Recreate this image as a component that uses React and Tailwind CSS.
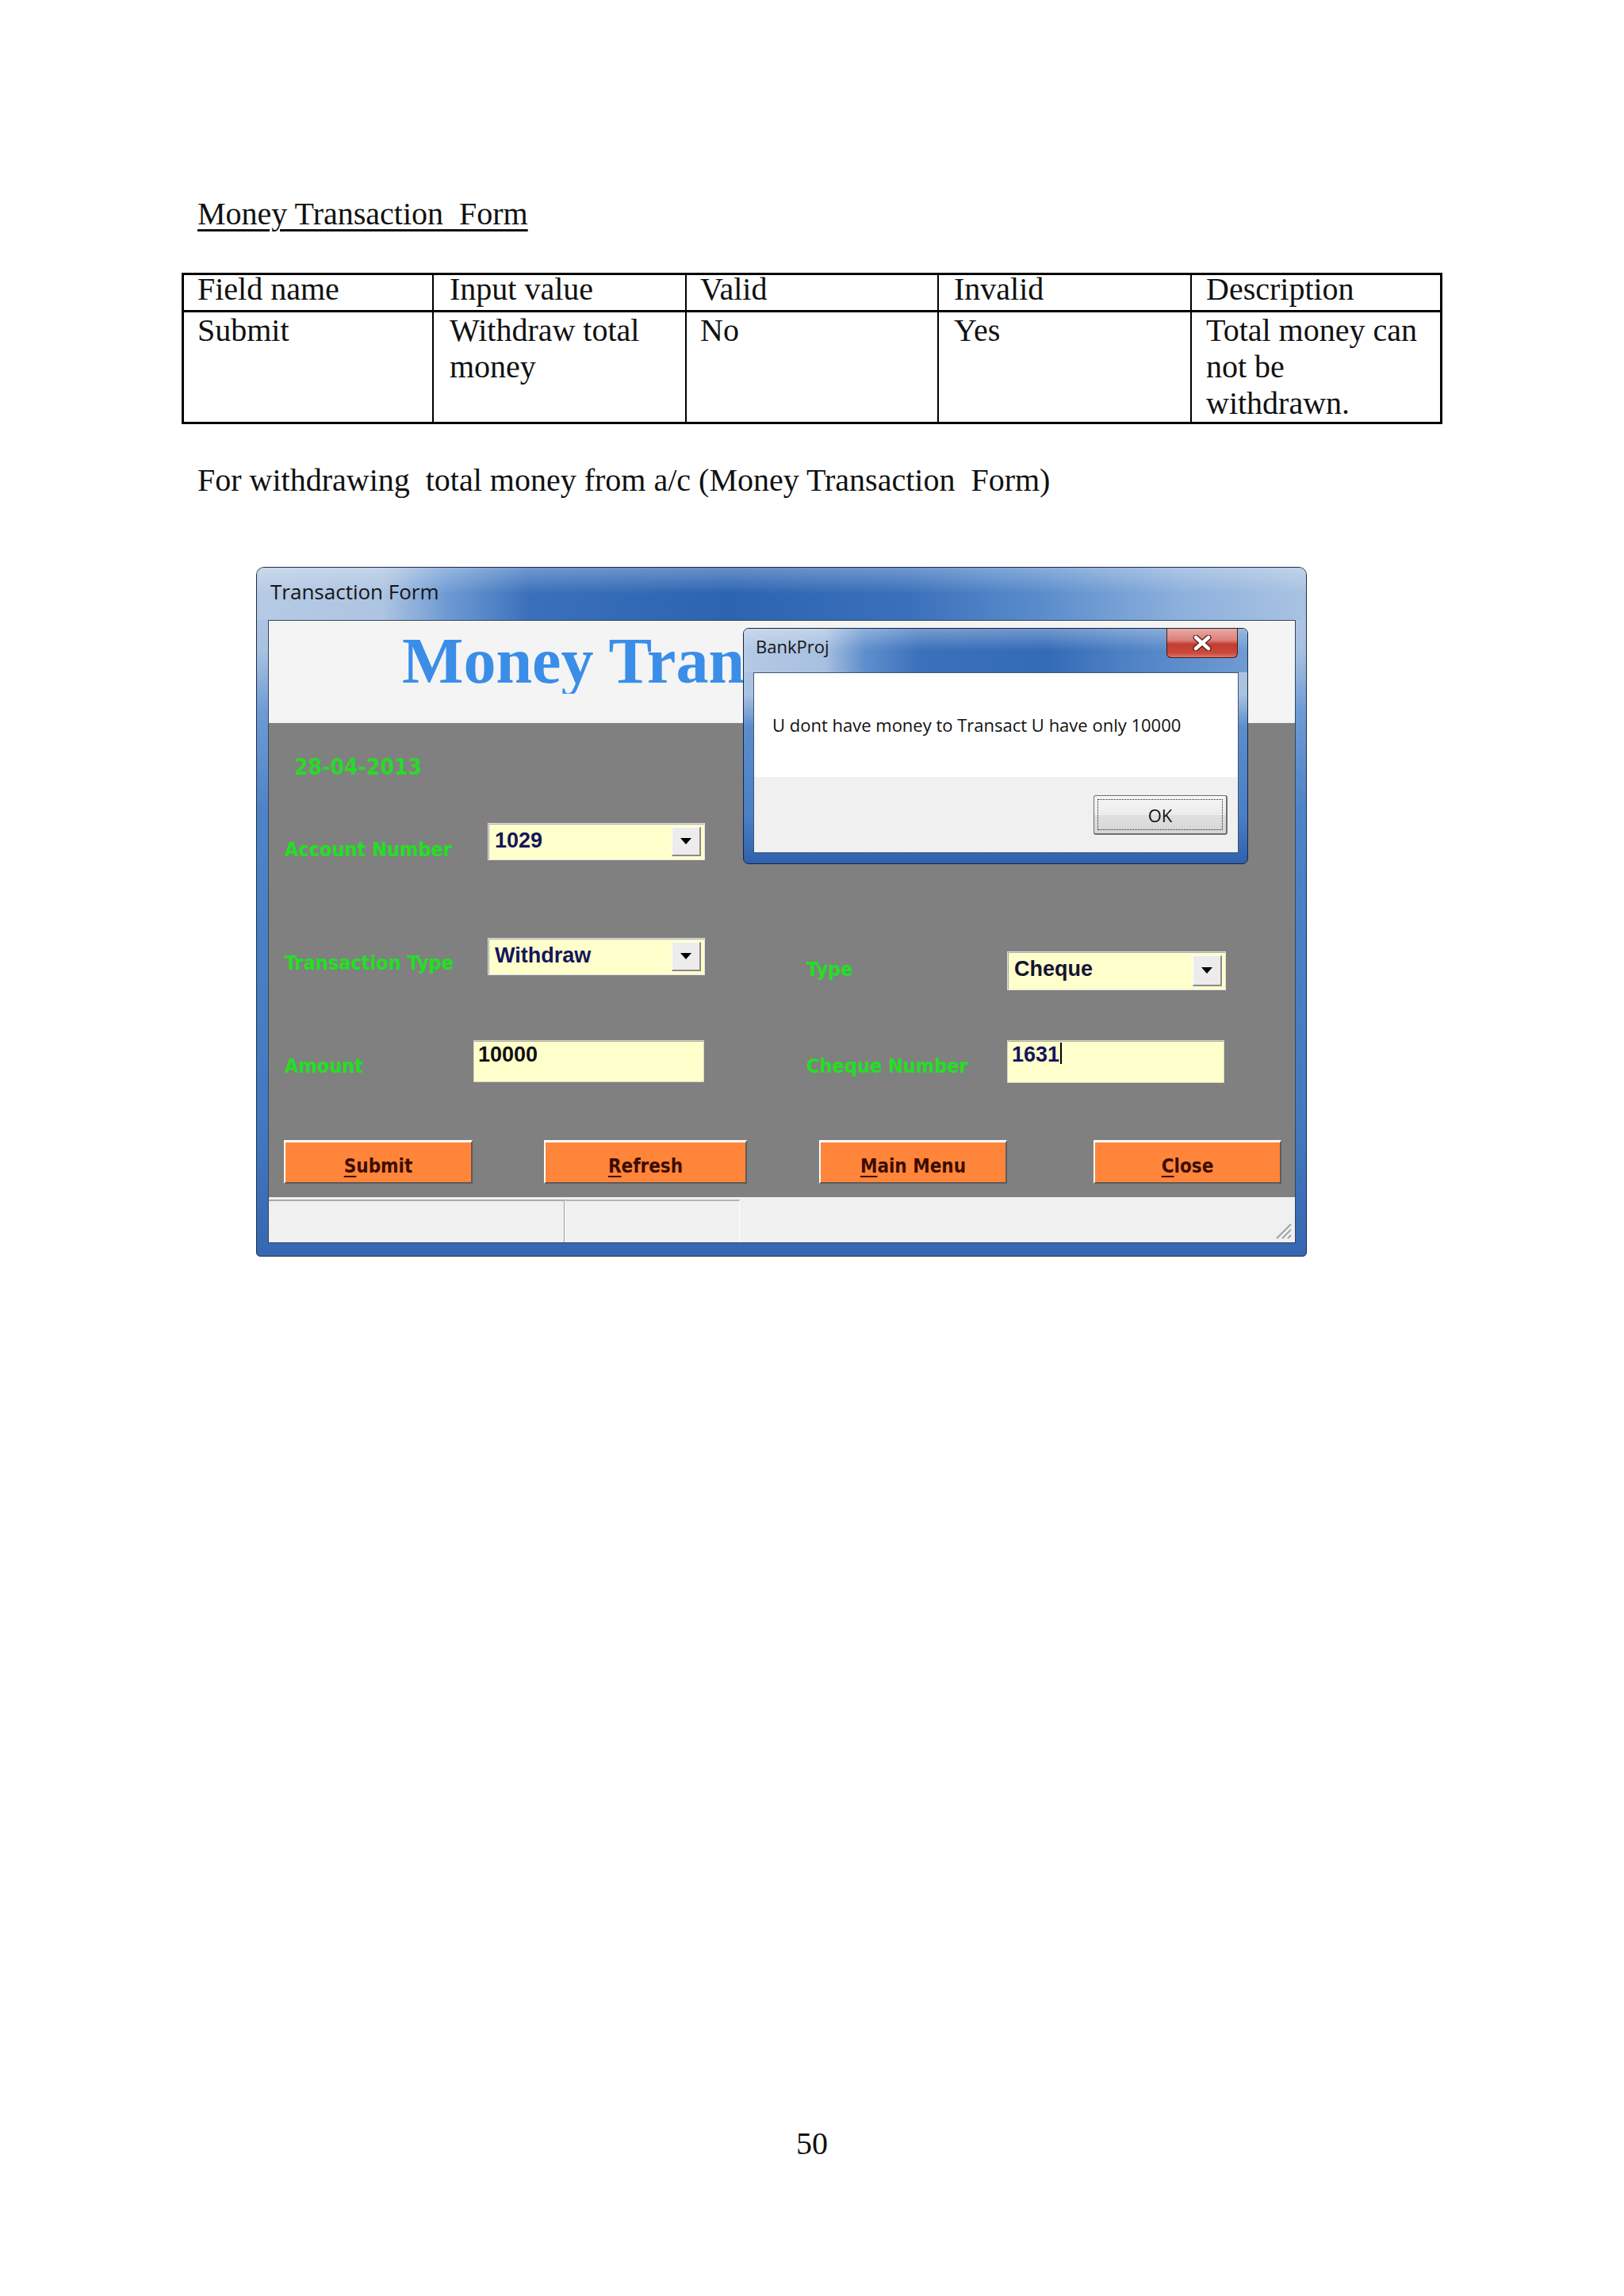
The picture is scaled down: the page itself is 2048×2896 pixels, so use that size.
import React from "react";

function Arrow() {
  return (
    <svg width="14" height="8" viewBox="0 0 14 8">
      <polygon points="0,0 14,0 7,8" fill="#000" />
    </svg>
  );
}

function Combo({ className, text, textClass }) {
  return (
    <div className={`flex border border-[#e4e4e4] bg-[#ffffcc] shadow-[inset_1px_1px_0_#a8a8a8] ${className}`}>
      <span className={`flex-1 pl-[8px] pt-[8px] font-['Liberation_Sans',Arial,sans-serif] font-bold text-[27px] leading-none ${textClass}`}>
        {text}
      </span>
      <div className="my-[4px] mr-[4px] w-[37px] flex items-center justify-center bg-[#ececec] border-t border-l border-t-white border-l-white border-b-2 border-r-2 border-b-[#8a8a8a] border-r-[#8a8a8a]">
        <Arrow />
      </div>
    </div>
  );
}

function Label({ children, className }) {
  return (
    <div className={`font-['DejaVu_Sans_Condensed','DejaVu_Sans',sans-serif] font-stretch-condensed font-bold text-[25px] leading-none text-[#22e022] whitespace-nowrap ${className}`}>
      {children}
    </div>
  );
}

function Btn({ className, first, rest }) {
  return (
    <div className={`h-[55px] flex justify-center items-start pt-[18px] bg-[#ff853a] border-t-[3px] border-l-[2px] border-t-white border-l-white border-b-[2px] border-r-[2px] border-b-[#5c5c5c] border-r-[#5c5c5c] font-['DejaVu_Sans_Condensed','DejaVu_Sans',sans-serif] font-stretch-condensed font-bold text-[24px] leading-none text-[#3d0c00] ${className}`}>
      <span>
        <span className="underline decoration-[2px] underline-offset-[4px]">{first}</span>
        {rest}
      </span>
    </div>
  );
}

export default function App() {
  return (
    <div className="w-[2048px] h-[2896px] bg-white flex flex-col pt-[247px] text-[#111]">
      {/* Heading */}
      <div className="ml-[249px] font-['Liberation_Serif',serif] text-[40px] leading-[46px] whitespace-pre underline decoration-[3px] underline-offset-[6px]">
        {"Money Transaction  Form"}
      </div>

      {/* Table */}
      <div className="ml-[229px] mt-[51px] w-[1590px] border-[3px] border-black font-['Liberation_Serif',serif] text-[40px]">
        <div className="grid grid-cols-[315px_319px_318px_319px_313px] border-b-[3px] border-black h-[47px] leading-[36px]">
          <div className="border-r-2 border-black pl-[17px]">Field name</div>
          <div className="border-r-2 border-black pl-[20px]">Input value</div>
          <div className="border-r-2 border-black pl-[17px]">Valid</div>
          <div className="border-r-2 border-black pl-[19px]">Invalid</div>
          <div className="pl-[18px]">Description</div>
        </div>
        <div className="grid grid-cols-[315px_319px_318px_319px_313px] h-[138px] leading-[46px]">
          <div className="border-r-2 border-black pl-[17px]">Submit</div>
          <div className="border-r-2 border-black pl-[20px]">
            <div>Withdraw total</div>
            <div>money</div>
          </div>
          <div className="border-r-2 border-black pl-[17px]">No</div>
          <div className="border-r-2 border-black pl-[19px]">Yes</div>
          <div className="pl-[18px]">
            <div>Total money can</div>
            <div>not be</div>
            <div>withdrawn.</div>
          </div>
        </div>
      </div>

      {/* Paragraph */}
      <div className="ml-[249px] mt-[48px] font-['Liberation_Serif',serif] text-[40px] leading-[46px] whitespace-pre">
        {"For withdrawing  total money from a/c (Money Transaction  Form)"}
      </div>

      {/* Window screenshot */}
      <div className="relative ml-[323px] mt-[86px] w-[1325px] h-[870px] shrink-0 rounded-t-[10px] rounded-b-[5px] border border-[#1d2d45] overflow-hidden flex flex-col bg-[linear-gradient(180deg,#b4c8e3_0%,#a9c1e1_12%,#6e9bd4_21%,#4f83c8_35%,#4479c1_80%,#3667b2_100%)]">
        {/* title bar */}
        <div className="h-[66px] shrink-0 pl-[17px] pt-[17px] bg-[linear-gradient(180deg,rgba(255,255,255,0.28)_0%,rgba(255,255,255,0)_50%),linear-gradient(90deg,#b6cae4_0%,#adc4e2_12%,#6f9bd3_18%,#3a70bb_26%,#2c64b2_45%,#3a70bb_62%,#5b8dcc_75%,#8db0dc_88%,#a9c2e2_100%)]">
          <span className="font-['Open_Sans',sans-serif] text-[26px] leading-none text-[#151515]">Transaction Form</span>
        </div>

        <div className="flex h-[786px] shrink-0">
          <div className="w-[14px] shrink-0" />
          <div className="w-[1296px] shrink-0 border border-[#34455d] flex flex-col">
            {/* white header */}
            <div className="h-[129px] shrink-0 bg-[#f4f4f4] pl-[168px] pt-[10px]">
              <div className="w-[430px] overflow-hidden whitespace-nowrap font-['Liberation_Serif',serif] font-bold text-[82px] leading-none text-[#3a8ee8]">
                Money Transaction Form
              </div>
            </div>

            {/* gray body */}
            <div className="h-[598px] shrink-0 bg-[#808080] flex flex-col">
              {/* date row */}
              <div className="h-[100px] shrink-0 pl-[32px] pt-[42px]">
                <div className="font-['DejaVu_Sans_Condensed','DejaVu_Sans',sans-serif] font-stretch-condensed font-bold text-[28px] leading-none text-[#2bd82b]">
                  28-04-2013
                </div>
              </div>

              {/* account row */}
              <div className="h-[138px] shrink-0 flex items-start pl-[20px]">
                <Label className="w-[256px] mt-[47px]">Account Number</Label>
                <Combo className="w-[274px] h-[47px] mt-[26px]" text="1029" textClass="text-[#15155a]" />
              </div>

              {/* transaction type row */}
              <div className="h-[140px] shrink-0 flex items-start pl-[20px]">
                <Label className="w-[256px] mt-[52px]">Transaction Type</Label>
                <Combo className="w-[274px] h-[47px] mt-[33px]" text="Withdraw" textClass="text-[#15155a]" />
                <Label className="ml-[128px] w-[253px] mt-[60px]">Type</Label>
                <Combo className="w-[276px] h-[49px] mt-[50px]" text="Cheque" textClass="text-[#141432]" />
              </div>

              {/* amount row */}
              <div className="h-[130px] shrink-0 flex items-start pl-[20px]">
                <Label className="w-[238px] mt-[42px]">Amount</Label>
                <div className="w-[291px] h-[53px] mt-[22px] bg-[#ffffcc] border border-[#d4d4c0] shadow-[inset_0_1px_0_#b0b0a0] pl-[5px] pt-[4px] font-['Liberation_Sans',Arial,sans-serif] font-bold text-[27px] leading-none text-[#111]">
                  10000
                </div>
                <Label className="ml-[129px] w-[253px] mt-[42px]">Cheque Number</Label>
                <div className="w-[274px] h-[54px] mt-[22px] bg-[#ffffcc] border border-[#d4d4c0] shadow-[inset_0_1px_0_#b0b0a0] pl-[5px] pt-[4px] flex items-start font-['Liberation_Sans',Arial,sans-serif] font-bold text-[27px] leading-none text-[#15155a]">
                  <span>1631</span>
                  <span className="inline-block w-[2px] h-[27px] bg-black ml-[1px] -mt-[2px]" />
                </div>
              </div>

              {/* buttons row */}
              <div className="h-[90px] shrink-0 flex items-start pl-[19px] pt-[18px]">
                <Btn className="w-[238px]" first="S" rest="ubmit" />
                <Btn className="w-[256px] ml-[90px]" first="R" rest="efresh" />
                <Btn className="w-[237px] ml-[91px]" first="M" rest="ain Menu" />
                <Btn className="w-[237px] ml-[109px]" first="C" rest="lose" />
              </div>
            </div>

            {/* status bar */}
            <div className="relative h-[57px] shrink-0 bg-[#f0f0f0] pt-[3px] flex">
              <div className="w-[373px] h-full border-t-2 border-t-[#a9a9a9] border-r border-r-[#9a9a9a]" />
              <div className="w-[221px] h-full border-t-2 border-t-[#b4b4b4] border-r border-r-[#ffffff] border-l border-l-[#ffffff]" />
              <svg className="absolute right-[3px] bottom-[3px]" width="24" height="24" viewBox="0 0 24 24">
                <line x1="22" y1="4" x2="4" y2="22" stroke="#9ba2ab" strokeWidth="2" />
                <line x1="22" y1="11" x2="11" y2="22" stroke="#9ba2ab" strokeWidth="2" />
                <line x1="22" y1="18" x2="18" y2="22" stroke="#9ba2ab" strokeWidth="2" />
              </svg>
            </div>
          </div>
          <div className="w-[13px] shrink-0" />
        </div>
        <div className="h-[16px] shrink-0" />

        {/* message box */}
        <div className="absolute left-[613px] top-[76px] w-[637px] h-[298px] rounded-[7px] border border-[#17263c] overflow-hidden flex flex-col bg-[linear-gradient(180deg,#b0c6e3_0%,#a9c2e1_28%,#5b8dcc_42%,#4a7ec5_80%,#2f61ac_100%)]">
          <div className="relative h-[55px] shrink-0 pl-[15px] pt-[11px] bg-[linear-gradient(180deg,rgba(255,255,255,0.3)_0%,rgba(255,255,255,0)_50%),linear-gradient(90deg,#b3c9e4_0%,#a8c0e0_16%,#5f8fcd_24%,#3b71bb_35%,#346bb7_60%,#4d80c4_75%,#6f9bd3_100%)]">
            <span className="font-['Open_Sans',sans-serif] text-[22px] leading-none text-[#151515]">BankProj</span>
            <div className="absolute right-[12px] top-0 w-[90px] h-[37px] rounded-b-[6px] border border-t-0 border-[#4a1a15] flex items-center justify-center bg-[linear-gradient(180deg,#e9aaa2_0%,#d9827a_40%,#c23b2f_55%,#c94a3c_85%,#d9776a_100%)]">
              <svg width="24" height="20" viewBox="0 0 24 20">
                <path d="M4 3 L20 17 M20 3 L4 17" stroke="#5a1d18" strokeWidth="7" strokeLinecap="round" />
                <path d="M4 3 L20 17 M20 3 L4 17" stroke="#ffffff" strokeWidth="4.5" strokeLinecap="round" />
              </svg>
            </div>
          </div>
          <div className="flex h-[228px] shrink-0">
            <div className="w-[12px] shrink-0" />
            <div className="w-[612px] shrink-0 border border-[#43556f] flex flex-col">
              <div className="h-[131px] shrink-0 bg-white pl-[23px] pt-[54px]">
                <span className="font-['Open_Sans',sans-serif] text-[22px] leading-none text-[#111] whitespace-nowrap">
                  U dont have money to Transact U have only 10000
                </span>
              </div>
              <div className="flex-1 bg-[#f0f0f0] flex justify-end items-start pt-[23px] pr-[13px]">
                <div className="relative w-[169px] h-[50px] rounded-[3px] border border-[#6e6e6e] border-b-2 border-r-2 bg-[linear-gradient(180deg,#f7f7f7_0%,#ececec_50%,#e0e0e0_51%,#d6d6d6_100%)] flex items-center justify-center">
                  <div className="absolute inset-[4px] border border-dotted border-[#222]" />
                  <span className="font-['Open_Sans',sans-serif] text-[22px] leading-none text-[#111]">OK</span>
                </div>
              </div>
            </div>
            <div className="w-[11px] shrink-0" />
          </div>
          <div className="h-[13px] shrink-0" />
        </div>
      </div>

      {/* page number */}
      <div className="mt-[1096px] text-center font-['Liberation_Serif',serif] text-[40px] leading-[46px]">
        50
      </div>
    </div>
  );
}
